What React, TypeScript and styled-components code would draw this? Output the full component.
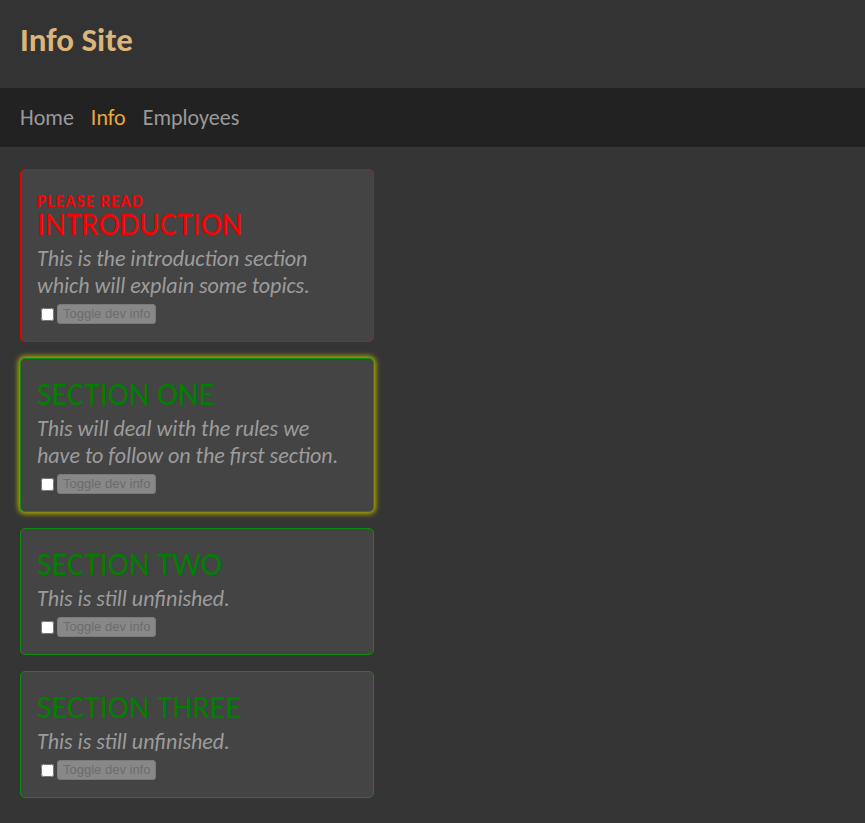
import React from "react";
import styled, { createGlobalStyle, css } from "styled-components";

const Global = createGlobalStyle`
  html, body { margin: 0; padding: 0; background: #353535; }
  body { font-family: "Carlito", "Lato", "Open Sans", sans-serif; }
`;

const Header = styled.header`
  height: 88px;
  background: #333333;
  padding: 20px 20px 0;
  box-sizing: border-box;
`;

const Title = styled.h1`
  margin: 0;
  font-size: 33px;
  line-height: 40px;
  font-weight: 700;
  color: #dcb57a;
`;

const Nav = styled.nav`
  height: 59px;
  background: #222222;
  display: flex;
  align-items: flex-start;
  gap: 17px;
  padding: 18px 20px 0;
  box-sizing: border-box;
`;

const NavLink = styled.a<{ $active?: boolean }>`
  font-size: 22px;
  line-height: 24px;
  color: ${(p) => (p.$active ? "#e9a93c" : "#9a9a9a")};
  text-decoration: none;
  cursor: pointer;
`;

const Main = styled.main`
  padding: 22px 20px 20px;
  display: flex;
  flex-direction: column;
  gap: 16px;
  align-items: flex-start;
`;

type Tone = "red" | "green" | "glow";

const Card = styled.section<{ $tone: Tone }>`
  width: 354px;
  box-sizing: border-box;
  background: #444444;
  border-radius: 5px;
  padding: 20px 16px 17px 16px;
  border: 1px solid ${(p) => (p.$tone === "red" ? "#ee0000" : "#0c8c0c")};
  ${(p) =>
    p.$tone === "glow" &&
    css`
      box-shadow: 0 0 5px 2px #acac00;
    `}
`;

const Kicker = styled.div`
  margin-top: 4px;
  font-size: 17px;
  font-weight: 700;
  color: #ff0000;
  text-transform: uppercase;
  letter-spacing: 1.2px;
  line-height: 15px;
`;

const Heading = styled.h2<{ $red?: boolean }>`
  margin: 0 0 4px;
  font-size: 32px;
  font-weight: 400;
  line-height: 32px;
  color: ${(p) => (p.$red ? "#ff0000" : "#008000")};
  text-transform: uppercase;
`;

const Desc = styled.p`
  margin: 0;
  font-size: 22px;
  font-style: italic;
  line-height: 27px;
  color: #9c9c9c;
`;

const Controls = styled.div`
  display: flex;
  align-items: center;
  margin-top: 5px;
  height: 20px;
`;

const Check = styled.input`
  width: 13px;
  height: 13px;
  margin: 0 3px 0 4px;
  accent-color: #ffffff;
`;

const DevButton = styled.button`
  font-family: "Liberation Sans", Arial, sans-serif;
  font-size: 13px;
  color: #6c6c6c;
  background: #888888;
  border: 1px solid #7a7a7a;
  border-radius: 3px;
  padding: 0 5px;
  height: 20px;
  line-height: 18px;
`;

const sections: { tone: Tone; kicker?: string; title: string; text: string[] }[] = [
  {
    tone: "red",
    kicker: "Please read",
    title: "Introduction",
    text: ["This is the introduction section", "which will explain some topics."],
  },
  {
    tone: "glow",
    title: "Section One",
    text: ["This will deal with the rules we", "have to follow on the first section."],
  },
  { tone: "green", title: "Section Two", text: ["This is still unfinished."] },
  { tone: "green", title: "Section Three", text: ["This is still unfinished."] },
];

export default function App() {
  return (
    <>
      <Global />
      <Header>
        <Title>Info Site</Title>
      </Header>
      <Nav>
        <NavLink>Home</NavLink>
        <NavLink $active>Info</NavLink>
        <NavLink>Employees</NavLink>
      </Nav>
      <Main>
        {sections.map((s) => (
          <Card key={s.title} $tone={s.tone}>
            {s.kicker && <Kicker>{s.kicker}</Kicker>}
            <Heading $red={s.tone === "red"}>{s.title}</Heading>
            <Desc>
              {s.text.map((t, i) => (
                <React.Fragment key={i}>
                  {i > 0 && <br />}
                  {t}
                </React.Fragment>
              ))}
            </Desc>
            <Controls>
              <Check type="checkbox" />
              <DevButton disabled>Toggle dev info</DevButton>
            </Controls>
          </Card>
        ))}
      </Main>
    </>
  );
}
